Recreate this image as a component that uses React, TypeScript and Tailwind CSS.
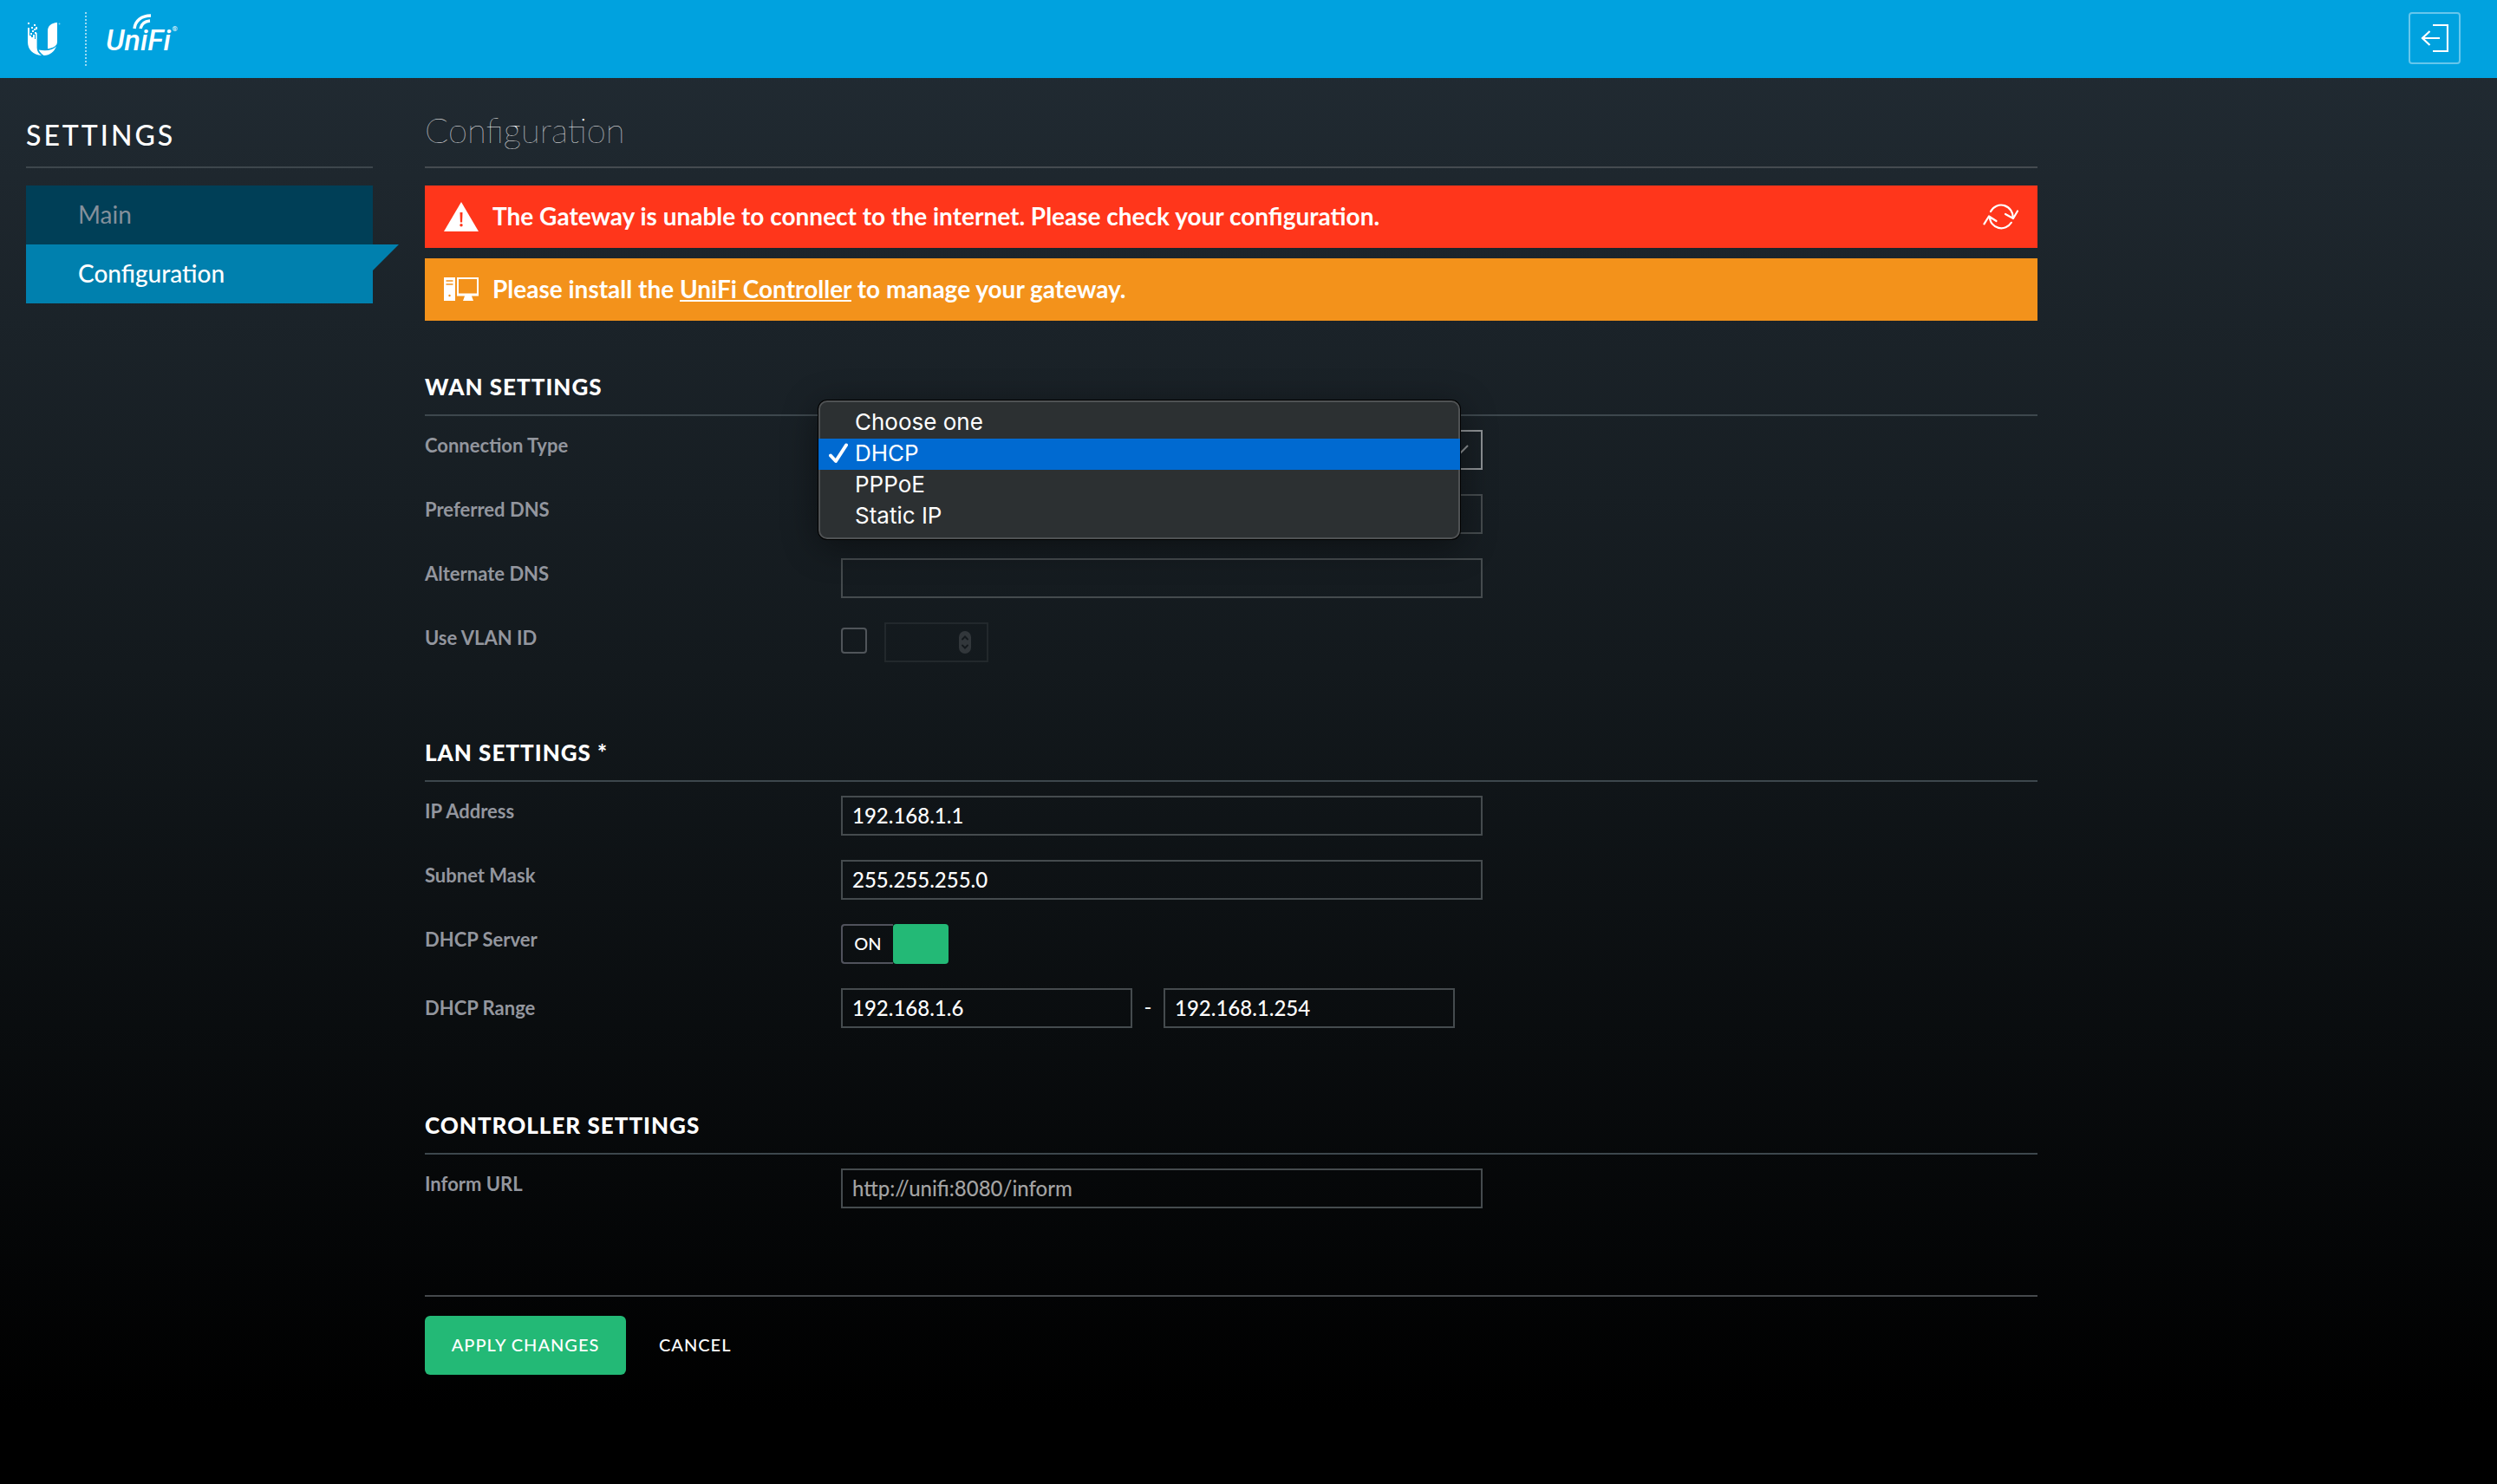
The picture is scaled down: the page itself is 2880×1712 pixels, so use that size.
import { useState, type FC, type InputHTMLAttributes, type ReactNode } from "react";
import clsx from "clsx";

const connectionTypes = ["Choose one", "DHCP", "PPPoE", "Static IP"];

const UbiquitiLogo: FC = () => (
  <svg width="38" height="40" viewBox="0 0 38 40" fill="#fff" aria-hidden="true">
    <path d="M34 0v22c0 1-.2 2.200-.6 3.200-1.800 2.300-4.800 4.600-10.400 5V10C23 4 27 .4 34 0Z" />
    <path d="M33 27.200C30.600 33.800 25.500 38 18.600 38c-2.400-1.600-4.500-3.600-6-6.600 8.400 1.800 16.400.6 20.400-4.200Z" />
    <path d="M0 6h2v9h2v2h2v-3h2v5h1v-7h1.600v17c0 4 2 7 5.400 9C6 37.600 0 31 0 22.600Z" />
    <path d="M0 0h2v2H0zM7 2h2v2H7zM4 5h2v2H4zM9 5h2v3H9zM5 9h2v2H5zM7 7h2v2H7zM8 11h2v2H8zM3 12h2v2H3z" />
    <circle cx="36.500" cy="1.500" r="1" opacity=".5" />
  </svg>
);

const WarningIcon: FC = () => (
  <svg width="40" height="34" viewBox="0 0 40 34" aria-hidden="true">
    <path d="M20 0 40 34H0Z" fill="#fff" />
    <path d="M18.500 12h3l-.4 11.500h-2.200Z" fill="#ff361b" />
    <circle cx="20" cy="26.800" r="1.700" fill="#ff361b" />
  </svg>
);

const ComputerIcon: FC = () => (
  <svg width="40" height="28" viewBox="0 0 40 28" aria-hidden="true">
    <path d="M0 0h13v27H0Z" fill="#fff" />
    <path d="M2.500 4h8M2.500 8h8" stroke="#f3921b" strokeWidth="1.500" />
    <circle cx="6.500" cy="21" r="1.200" fill="#f3921b" />
    <path
      d="M15 0h25v21.500h-8l2 5.500H22l2-5.500h-9ZM17 2v16.500h21V2Z"
      fill="#fff"
      fillRule="evenodd"
    />
  </svg>
);

const RefreshIcon: FC = () => (
  <svg
    width="42"
    height="32"
    viewBox="0 0 42 32"
    fill="none"
    stroke="#fff"
    strokeWidth="2.200"
    strokeLinecap="round"
    strokeLinejoin="round"
    aria-hidden="true"
  >
    <path d="M10 10A13.500 13.500 0 0 1 35.500 17.500M27 13l9 5L41 9.500" />
    <path d="M33.800 22.800A13.500 13.500 0 0 1 8.800 16.500M2.500 24.300 8 15.500l8.500 5.500" />
  </svg>
);

const LogoutIcon: FC = () => (
  <svg
    width="32"
    height="32"
    viewBox="0 0 32 32"
    fill="none"
    stroke="#fff"
    strokeWidth="2.200"
    aria-hidden="true"
  >
    <path d="M14 1h17v30H14" />
    <path d="M22 16H2M10.500 8 2 16l8.500 8" />
  </svg>
);

interface ISectionProps {
  title: string;
  children: ReactNode;
}

const Section: FC<ISectionProps> = ({ title, children }) => (
  <section className="pb-[86px]">
    <h2 className="border-b-2 border-[#3d474d] pb-3.5 text-[26px] leading-9 font-black tracking-[1px] uppercase">
      {title}
    </h2>
    <div className="flex flex-col gap-7 pt-4">{children}</div>
  </section>
);

interface IRowProps {
  id: string;
  label: string;
  centered?: boolean;
  children: ReactNode;
}

const Row: FC<IRowProps> = ({ id, label, centered, children }) => (
  <div
    className={clsx(
      "grid grid-cols-[480px_minmax(0,740px)]",
      centered ? "items-center pb-2" : "items-start",
    )}
  >
    <label htmlFor={id} className="text-[22px] leading-9 font-bold text-[#93969e]">
      {label}
    </label>
    <div className="relative flex h-[46px] items-center">{children}</div>
  </div>
);

const TextInput: FC<InputHTMLAttributes<HTMLInputElement>> = ({ className, ...rest }) => (
  <input
    type="text"
    className={clsx(
      "h-[46px] border-2 border-[#454b4e] bg-transparent px-[11px] pb-0.5 text-2xl font-medium text-white outline-none placeholder:text-[#a3a3a3]",
      className ?? "w-full",
    )}
    {...rest}
  />
);

const ConnectionSelect: FC = () => {
  const [value, setValue] = useState("DHCP");
  const [isOpen, setIsOpen] = useState(true);

  const choose = (type: string) => {
    setValue(type);
    setIsOpen(false);
  };

  return (
    <>
      <select
        id="connection-type"
        value={value}
        onChange={(e) => choose(e.target.value)}
        className="h-[46px] w-full appearance-none border-2 border-[#8d9194] bg-transparent px-[11px] text-2xl text-white outline-none"
      >
        {connectionTypes.map((type) => (
          <option key={type}>{type}</option>
        ))}
      </select>
      <svg
        className="pointer-events-none absolute top-4 right-4"
        width="22"
        height="14"
        fill="none"
        stroke="#8d9194"
        strokeWidth="2"
        aria-hidden="true"
      >
        <path d="m1 2 10 10L21 2" />
      </svg>
      {isOpen && (
        <ul
          role="listbox"
          aria-label="Connection Type"
          className="absolute -top-[34px] -left-[26px] z-10 w-full rounded-[10px] border-2 border-[#4f5254] bg-[#2c3032] py-1.5 font-['Inter',sans-serif] text-[26px] leading-[34px] shadow-[0_8px_40px_rgba(0,0,0,0.45)] ring-1 ring-black"
        >
          {connectionTypes.map((type) => (
            <li
              key={type}
              role="option"
              aria-selected={type === value}
              onClick={() => choose(type)}
              className={clsx(
                "-mx-0.5 flex cursor-default items-center pb-0.5 pl-3",
                type === value && "bg-[#006ad1]",
              )}
            >
              <span className="w-[30px]">
                {type === value && (
                  <svg width="22" height="24" viewBox="0 0 22 24" fill="none" aria-hidden="true">
                    <path
                      d="M2 14.500 8 21 20 2.500"
                      stroke="#fff"
                      strokeWidth="4"
                      strokeLinecap="round"
                      strokeLinejoin="round"
                    />
                  </svg>
                )}
              </span>
              {type}
            </li>
          ))}
        </ul>
      )}
    </>
  );
};

const Header: FC = () => (
  <header className="flex h-[90px] items-start justify-between bg-[#00a2df] pt-3.5 pr-[42px] pl-8">
    <div className="flex">
      <a href="#" aria-label="Ubiquiti" className="pt-3">
        <UbiquitiLogo />
      </a>
      <div className="ml-7 h-[62px] border-l-2 border-dotted border-white/60" />
      <a
        href="#"
        className="relative ml-[22px] pt-3 font-['Roboto',sans-serif] text-[34px] leading-10 font-medium italic"
      >
        UniFi
        <svg
          className="absolute top-0.5 left-[30px]"
          width="24"
          height="18"
          fill="none"
          stroke="#fff"
          strokeWidth="3.500"
          aria-hidden="true"
        >
          <path d="M3 17C4 8 11 2 22 2M10 17c1-5 5-8.500 11-9" />
        </svg>
        <span className="absolute top-4 -right-2 text-[8px] leading-none not-italic">®</span>
      </a>
    </div>
    <button
      type="button"
      aria-label="Log out"
      className="flex size-[60px] items-center justify-center rounded-[4px] border-2 border-white/40"
    >
      <LogoutIcon />
    </button>
  </header>
);

const Sidebar: FC = () => (
  <aside className="w-[400px] shrink-0">
    <h2 className="border-b-2 border-[#3d464c] pt-1.5 pb-3 text-[32px] leading-12 font-medium tracking-[3px]">
      SETTINGS
    </h2>
    <nav className="mt-5 text-[28px] leading-[66px]">
      <a href="#main" className="block bg-[#003f57] pb-0.5 pl-15 text-[#84909b]">
        Main
      </a>
      <a
        href="#configuration"
        className="relative block bg-[#0080ae] pb-0.5 pl-15 font-medium after:absolute after:top-0 after:left-full after:size-[30px] after:bg-[#0080ae] after:[clip-path:polygon(0_0,100%_0,0_100%)]"
      >
        Configuration
      </a>
    </nav>
  </aside>
);

const App: FC = () => {
  const [dhcpOn, setDhcpOn] = useState(true);
  const [useVlan, setUseVlan] = useState(false);

  return (
    <div className="min-h-screen bg-linear-to-b/srgb from-[#222c34] via-[#13191d] via-45% to-black to-95% font-['Lato',sans-serif] text-white">
      <Header />
      <div className="flex gap-15 px-[30px] pt-9">
        <Sidebar />
        <main className="max-w-[1860px] flex-1">
          <h1 className="border-b-2 border-[#454b50] pb-[18px] text-[40px] leading-12 font-extralight">
            Configuration
          </h1>

          <div className="mt-5 flex h-[72px] items-center gap-4 bg-[#ff361b] px-[22px] text-[28px] font-bold">
            <WarningIcon />
            <p className="flex-1 pb-0.5">
              The Gateway is unable to connect to the internet. Please check your configuration.
            </p>
            <button type="button" aria-label="Retry connection">
              <RefreshIcon />
            </button>
          </div>
          <div className="mt-3 flex h-[72px] items-center gap-4 bg-[#f3921b] px-[22px] text-[28px] font-bold">
            <ComputerIcon />
            <p className="pb-0.5">
              Please install the{" "}
              <a href="#controller" className="underline">
                UniFi Controller
              </a>{" "}
              to manage your gateway.
            </p>
          </div>

          <form className="pt-[58px]" onSubmit={(e) => e.preventDefault()}>
            <Section title="WAN Settings">
              <Row id="connection-type" label="Connection Type">
                <ConnectionSelect />
              </Row>
              <Row id="preferred-dns" label="Preferred DNS">
                <TextInput id="preferred-dns" />
              </Row>
              <Row id="alternate-dns" label="Alternate DNS">
                <TextInput id="alternate-dns" />
              </Row>
              <Row id="use-vlan" label="Use VLAN ID">
                <input
                  id="use-vlan"
                  type="checkbox"
                  checked={useVlan}
                  onChange={(e) => setUseVlan(e.target.checked)}
                  className="mb-1 size-[30px] appearance-none rounded-[4px] border-2 border-[#50555a] checked:bg-[#23b976]"
                />
                <div className={clsx("relative ml-5", !useVlan && "opacity-30")}>
                  <TextInput
                    aria-label="VLAN ID"
                    inputMode="numeric"
                    disabled={!useVlan}
                    className="w-[120px]"
                  />
                  <svg
                    className="absolute top-2.5 right-5"
                    width="14"
                    height="26"
                    fill="none"
                    aria-hidden="true"
                  >
                    <rect width="14" height="26" rx="7" fill="#777a7e" />
                    <path
                      d="m4 9.500 3-3 3 3M4 16.500l3 3 3-3"
                      stroke="#15191c"
                      strokeWidth="2"
                      strokeLinecap="round"
                    />
                  </svg>
                </div>
              </Row>
            </Section>

            <Section title="LAN Settings *">
              <Row id="ip-address" label="IP Address">
                <TextInput id="ip-address" defaultValue="192.168.1.1" />
              </Row>
              <Row id="subnet-mask" label="Subnet Mask">
                <TextInput id="subnet-mask" defaultValue="255.255.255.0" />
              </Row>
              <Row id="dhcp-server" label="DHCP Server">
                <button
                  id="dhcp-server"
                  type="button"
                  role="switch"
                  aria-checked={dhcpOn}
                  onClick={() => setDhcpOn(!dhcpOn)}
                  className={clsx(
                    "flex h-[46px] w-[124px] rounded-[4px] text-xl font-medium",
                    !dhcpOn && "flex-row-reverse",
                  )}
                >
                  <span className="h-full flex-1 rounded-l-[4px] border-2 border-r-0 border-[#50525c] leading-10">
                    {dhcpOn ? "ON" : "OFF"}
                  </span>
                  <span
                    className={clsx(
                      "h-full w-16 rounded-[4px]",
                      dhcpOn ? "bg-[#23b976]" : "bg-[#50525c]",
                    )}
                  />
                </button>
              </Row>
              <Row id="dhcp-start" label="DHCP Range" centered>
                <TextInput id="dhcp-start" defaultValue="192.168.1.6" className="w-[336px]" />
                <span className="w-9 pb-1 text-center text-2xl">-</span>
                <TextInput
                  aria-label="DHCP range end"
                  defaultValue="192.168.1.254"
                  className="w-[336px]"
                />
              </Row>
            </Section>

            <Section title="Controller Settings">
              <Row id="inform-url" label="Inform URL">
                <TextInput id="inform-url" placeholder="http://unifi:8080/inform" />
              </Row>
            </Section>

            <div className="mt-3.5 flex gap-[38px] border-t-2 border-[#45494c] pt-[22px] pb-10 text-xl font-medium tracking-[1px]">
              <button type="submit" className="h-[68px] w-[232px] rounded-[6px] bg-[#23b976] pb-0.5">
                APPLY CHANGES
              </button>
              <button type="button" className="h-[68px] pb-0.5">
                CANCEL
              </button>
            </div>
          </form>
        </main>
      </div>
    </div>
  );
};

export default App;
